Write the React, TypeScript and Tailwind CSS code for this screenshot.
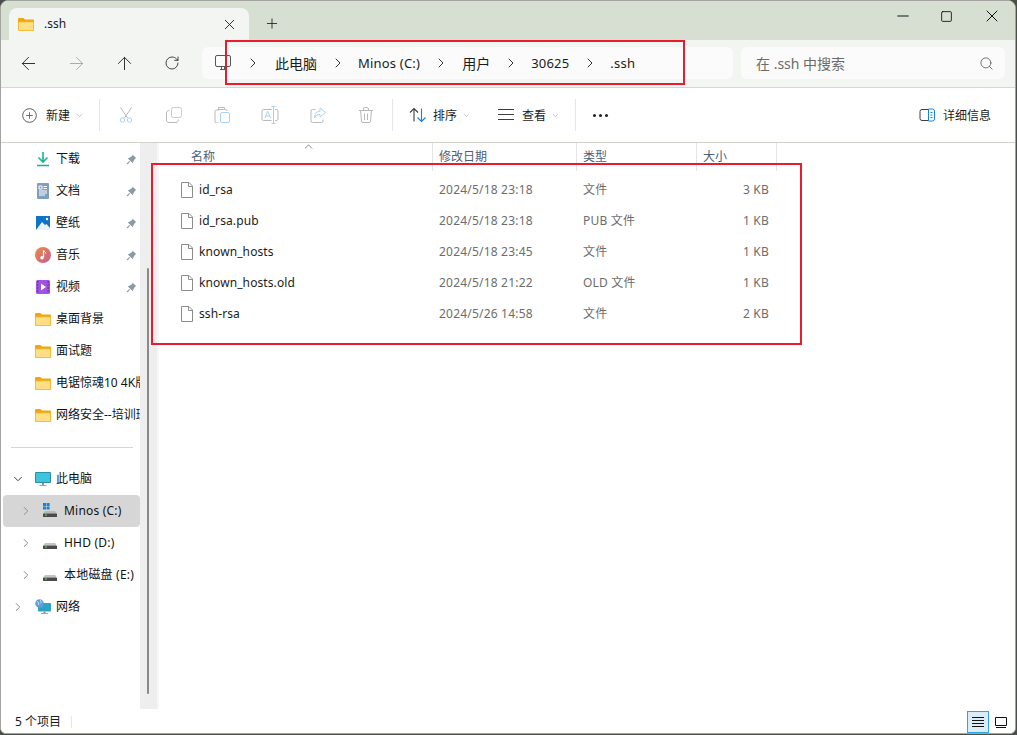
import {
  ArrowLeft,
  ArrowRight,
  ArrowUp,
  ChevronDown,
  ChevronRight,
  ChevronUp,
  Minus,
  Plus,
  RotateCw,
  Search,
  Square,
  X,
} from "lucide-react";
import type { ReactNode } from "react";

const FONT = "font-['Noto_Sans','Noto_Sans_CJK_SC',sans-serif]";

function FolderIcon({ className = "w-4 h-4 shrink-0" }: { className?: string }) {
  return (
    <svg viewBox="0 0 16 16" className={className}>
      <path d="M0 3a1 1 0 0 1 1-1h4.500l1.500 1.500h8a1 1 0 0 1 1 1V6H0z" fill="#f0a80e" />
      <path d="M0 5.500h16V14a1 1 0 0 1-1 1H1a1 1 0 0 1-1-1z" fill="#f0b429" />
      <path d="M.8 6.200h14.400V14a.3.3 0 0 1-.3.3H1.100a.3.3 0 0 1-.3-.3z" fill="#ffdf85" />
    </svg>
  );
}

function DownloadIcon() {
  return (
    <svg viewBox="0 0 16 16" className="w-4 h-4 shrink-0">
      <path d="M8 1v9.500M3.500 6.500 8 11l4.500-4.500" stroke="#16b58e" strokeWidth="1.600" fill="none" />
      <path d="M2 14.500h12" stroke="#16b58e" strokeWidth="1.600" />
    </svg>
  );
}

function DocIcon() {
  return (
    <svg viewBox="0 0 16 16" className="w-4 h-4 shrink-0">
      <rect x="2" y="0" width="12" height="16" rx="1" fill="#7f9fc0" />
      <path d="M4 3h3v3H4zM8.500 3.500H12M8.500 5.500H12M4 8h8M4 10h8M4 12h6" stroke="#fff" strokeWidth="1" fill="none" />
    </svg>
  );
}

function PictureIcon() {
  return (
    <svg viewBox="0 0 16 16" className="w-4 h-4 shrink-0">
      <rect x="1" y="1" width="14" height="14" fill="#0f74c8" />
      <circle cx="12" cy="4" r="1.200" fill="#fff" />
      <path d="M1 15 7 7l3 3 1.500-1L15 13v2z" fill="#e8f3fb" />
    </svg>
  );
}

function MusicIcon() {
  return (
    <svg viewBox="0 0 16 16" className="w-4 h-4 shrink-0">
      <defs>
        <linearGradient id="music-bg" x1="0" y1="0" x2="1" y2="1">
          <stop offset="0" stopColor="#f08a3c" />
          <stop offset="1" stopColor="#c25c9a" />
        </linearGradient>
      </defs>
      <circle cx="8" cy="8" r="8" fill="url(#music-bg)" />
      <path d="M8.500 3.500v7" stroke="#fff" strokeWidth="1.300" />
      <path d="M8.800 3.500c.5 1.500 2 1.500 2 3" stroke="#fff" strokeWidth="1" fill="none" />
      <circle cx="7" cy="10.800" r="1.700" fill="#fff" />
    </svg>
  );
}

function VideoIcon() {
  return (
    <svg viewBox="0 0 16 16" className="w-4 h-4 shrink-0">
      <rect x="1" y="1" width="14" height="14" rx="1.500" fill="#a052e0" />
      <path d="M6 4.500v7l5-3.500z" fill="#fff" />
      <path d="M2 3h1.500M2 6h1.500M2 9h1.500M2 12h1.500M12.500 3H14M12.500 6H14M12.500 9H14M12.500 12H14" stroke="#4a1d8c" strokeWidth="1.200" />
    </svg>
  );
}

function PcIcon() {
  return (
    <svg viewBox="0 0 16 16" className="w-4 h-4 shrink-0">
      <rect x="0" y="1" width="16" height="11" rx="1" fill="#2c8fa8" />
      <rect x="1" y="2" width="14" height="9" fill="#3cc4de" />
      <rect x="7" y="12" width="2" height="2" fill="#7a9aa6" />
      <rect x="4.500" y="14" width="7" height="1" fill="#8fa8b2" />
    </svg>
  );
}

function DriveIcon({ windows = false }: { windows?: boolean }) {
  return (
    <svg viewBox="0 0 16 16" className="w-4 h-4">
      {windows && (
        <path d="M1 0h3v3H1zM4.600 0h3v3h-3zM1 3.600h3v3H1zM4.600 3.600h3v3h-3z" fill="#1683d8" />
      )}
      <path d="M1.500 10.500c.5-1.500 1-2.500 2-2.500h9c1 0 1.500 1 2 2.500z" fill={windows ? "#b8b8b8" : "#c4c4c4"} />
      <rect x="1" y="10.500" width="14" height="3.500" rx=".5" fill="#4a4a4a" />
      <rect x="3" y="11.500" width="2" height="1" fill="#5fe05f" />
    </svg>
  );
}

function NetworkIcon() {
  return (
    <svg viewBox="0 0 16 16" className="w-4 h-4 shrink-0">
      <rect x="3" y="4" width="13" height="8.500" rx=".8" fill="#2aa3c4" />
      <rect x="8.500" y="12.500" width="2" height="1.500" fill="#7a9aa6" />
      <rect x="6" y="14" width="7" height="1" fill="#8fa8b2" />
      <circle cx="4.500" cy="4.500" r="4.200" fill="#5f9fd8" />
      <path d="M2 2.500c1.500.5 2 2 1.500 3.500M5 .8c1 1 1.500 2.500.5 3.500" stroke="#d8ecf8" strokeWidth=".9" fill="none" />
    </svg>
  );
}

function PinIcon() {
  return (
    <svg viewBox="0 0 12 12" className="w-[11px] h-[11px]">
      <path d="M7.300.8 11.200 4.700 9.800 5.300 7.700 8.600 7.400 10.200 1.800 4.600 3.400 4.300 6.700 2.200z" fill="#8e989f" />
      <path d="M4 8 1 11" stroke="#8e989f" strokeWidth="1.300" />
    </svg>
  );
}

function FileIcon() {
  return (
    <svg viewBox="0 0 12 16" className="w-3 h-4 shrink-0">
      <path d="M.5.500h7.500l3.500 3.500v11.500H.5z" fill="#fff" stroke="#8c8c8c" />
      <path d="M7.500.500v4h4" fill="none" stroke="#8c8c8c" />
    </svg>
  );
}

const GREY = "#b9b9b9";
const BLUE = "#a9d2f2";

function CutIcon() {
  return (
    <svg viewBox="0 0 16 16" className="w-4 h-4" fill="none" strokeWidth="1">
      <path d="M2.500.5 9.500 11M13.500.5 6.500 11" stroke={GREY} />
      <circle cx="4.500" cy="13" r="2.200" stroke={BLUE} />
      <circle cx="11.500" cy="13" r="2.200" stroke={BLUE} />
    </svg>
  );
}

function CopyIcon() {
  return (
    <svg viewBox="0 0 16 16" className="w-4 h-4" fill="none" strokeWidth="1">
      <rect x="5.500" y=".5" width="10" height="10" rx="2" stroke={BLUE} />
      <path d="M3.500 3.500c-2 0-3 1-3 2.500v7c0 1.500 1 2.500 2.500 2.500h7c1.500 0 2.500-1 2.500-3" stroke={GREY} />
    </svg>
  );
}

function PasteIcon() {
  return (
    <svg viewBox="0 0 16 16" className="w-4 h-4" fill="none" strokeWidth="1">
      <path d="M5.500 3H2.500a1.500 1.500 0 0 0-1.500 1.500v10A1.500 1.500 0 0 0 2.500 16h3M4.500 2.500h6V.5h-6zM10.500 2.500h1a1.500 1.500 0 0 1 1.500 1.500" stroke={GREY} />
      <rect x="6.500" y="5.500" width="9" height="10" rx="1.500" stroke={BLUE} />
    </svg>
  );
}

function RenameIcon() {
  return (
    <svg viewBox="0 0 18 18" className="w-[18px] h-[18px]" fill="none" strokeWidth="1">
      <path d="M10.500 3.500H2.500a1.500 1.500 0 0 0-1.500 1.500v8a1.500 1.500 0 0 0 1.500 1.500h8M14 3.500h1.500A1.500 1.500 0 0 1 17 5v8a1.500 1.500 0 0 1-1.500 1.500H14" stroke={GREY} />
      <path d="M12.500 1v16M10.500.5h4M10.500 17.500h4" stroke={BLUE} />
      <path d="M4 12l2.500-6.500h.5L9.500 12M5 10h3.500" stroke={BLUE} />
    </svg>
  );
}

function ShareIcon() {
  return (
    <svg viewBox="0 0 16 16" className="w-4 h-4" fill="none" strokeWidth="1">
      <path d="M5.500 2.500H2.500A1.500 1.500 0 0 0 1 4v10a1.500 1.500 0 0 0 1.500 1.500h9A1.500 1.500 0 0 0 13 14v-1.500" stroke={GREY} />
      <path d="M10 .8 15.500 5.500 10 10V7.500C7.500 7.500 5.500 8.500 4.500 11c0-4 2-6.500 5.500-6.800z" stroke={BLUE} />
    </svg>
  );
}

function TrashIcon() {
  return (
    <svg viewBox="0 0 16 16" className="w-4 h-4" fill="none" strokeWidth="1" stroke={GREY}>
      <path d="M1 3.500h14M5.500 3.500V2a1.500 1.500 0 0 1 1.500-1.500h2A1.500 1.500 0 0 1 10.500 2v1.500M2.500 3.500l1 10.500a1.500 1.500 0 0 0 1.500 1.500h6a1.500 1.500 0 0 0 1.500-1.500l1-10.500M6.500 6.500v6.500M9.500 6.500v6.500" />
    </svg>
  );
}

function SortIcon() {
  return (
    <svg viewBox="0 0 18 16" className="w-[18px] h-4" fill="none" strokeWidth="1.100">
      <path d="M5 14.500V1.500M1 5.500l4-4 4 4" stroke="#3d3d3d" />
      <path d="M12.500 1.500v13M8.500 10.500l4 4 4-4" stroke="#1683d8" />
    </svg>
  );
}

function ViewIcon() {
  return (
    <svg viewBox="0 0 16 12" className="w-4 h-3" stroke="#3d3d3d" strokeWidth="1">
      <path d="M0 .5h16M0 5.500h16M0 10.500h16" />
    </svg>
  );
}

function PanelIcon() {
  return (
    <svg viewBox="0 0 16 14" className="w-4 h-[14px]" fill="none" strokeWidth="1">
      <path d="M9.500 1.500H3A2 2 0 0 0 1 3.500v7a2 2 0 0 0 2 2h6.500" stroke="#3d3d3d" />
      <path d="M9.500 1h4A2 2 0 0 1 15.500 3v8a2 2 0 0 1-2 2h-4z" stroke="#1683d8" />
      <path d="M11.500 4.500h2M11.500 7h2M11.500 9.500h2" stroke="#1683d8" />
    </svg>
  );
}

function NavButton({ children }: { children: ReactNode }) {
  return <div className="w-12 h-8 flex items-center justify-center shrink-0">{children}</div>;
}

function Chevron() {
  return <ChevronRight size={16} strokeWidth={1.500} className="text-[#333] shrink-0 ml-[13px]" />;
}

function Titlebar() {
  return (
    <div className="h-[39px] bg-[#d7ded2] flex shrink-0">
      <div className="ml-[8px] mt-[7px] w-[240px] h-[32px] bg-[#f3f5f2] rounded-t-lg flex items-center pl-[9px] pr-[11px]">
        <FolderIcon className="w-4 h-4" />
        <span className="ml-[10px] text-[12px] text-[#1c1c1c] flex-1">.ssh</span>
        <X size={17} strokeWidth={1.300} className="text-[#222]" />
      </div>
      <div className="ml-[15px] mt-[14px] w-4 h-4 flex items-center justify-center">
        <Plus size={17} strokeWidth={1.300} className="text-[#222]" />
      </div>
      <div className="ml-auto flex items-center h-[30px] pr-[13px] text-[#111]">
        <Minus size={18} strokeWidth={1.300} className="mr-[28px]" />
        <Square size={13} strokeWidth={1.600} className="mr-[29px]" />
        <X size={20} strokeWidth={1.200} />
      </div>
    </div>
  );
}

function AddressBar() {
  return (
    <div className="h-[48px] bg-[#f3f5f2] border-b border-[#d6d6d6] flex items-center pl-[3px] pb-[1px] shrink-0">
      <NavButton>
        <ArrowLeft size={21} strokeWidth={1.100} className="text-[#2c2c2c]" />
      </NavButton>
      <NavButton>
        <ArrowRight size={21} strokeWidth={1.100} className="text-[#a8a8a8]" />
      </NavButton>
      <NavButton>
        <ArrowUp size={21} strokeWidth={1.100} className="text-[#2c2c2c]" />
      </NavButton>
      <NavButton>
        <RotateCw size={16} strokeWidth={1.300} className="text-[#2c2c2c]" />
      </NavButton>
      <div className="ml-[6px] w-[531px] h-8 bg-[#fafbfa] rounded-md flex items-center pl-[13px] shrink-0 text-[#1c1c1c] whitespace-nowrap">
        <svg viewBox="0 0 16 16" className="w-4 h-4 text-[#555] shrink-0" fill="none" stroke="currentColor" strokeWidth="1">
          <rect x=".5" y=".5" width="15" height="11" rx="1.500" />
          <path d="M6.500 11.500v3M9.500 11.500v3M5 14.500h6" />
        </svg>
        <ChevronRight size={16} strokeWidth={1.500} className="text-[#333] shrink-0 ml-[14px]" />
        <span className="ml-[14px] text-[14px]">此电脑</span>
        <Chevron />
        <span className="ml-[12px] text-[13px] tracking-[0.2px] pt-[2px]">Minos (C:)</span>
        <Chevron />
        <span className="ml-[13px] text-[14px]">用户</span>
        <Chevron />
        <span className="ml-[12px] text-[13px] tracking-[0.2px] pt-[2px]">30625</span>
        <Chevron />
        <span className="ml-[12px] text-[13px] tracking-[0.2px] pt-[2px]">.ssh</span>
      </div>
      <div className="ml-[8px] w-[264px] h-8 bg-[#fafbfa] rounded-md flex items-center pl-[15px] pr-[11px] shrink-0">
        <span className="text-[14px] text-[#6b6b6b] flex-1">在 .ssh 中搜索</span>
        <Search size={15} strokeWidth={1.300} className="text-[#555]" />
      </div>
    </div>
  );
}

function Toolbar() {
  return (
    <div className="h-[55px] bg-white border-b border-[#d2d2cc] flex items-center shrink-0 text-[12px] text-[#1c1c1c]">
      <svg viewBox="0 0 16 16" className="w-[15px] h-[15px] ml-[21px]" fill="none">
        <circle cx="8" cy="8" r="7.300" stroke="#555" />
        <path d="M8 4.500v7M4.500 8h7" stroke="#1683d8" strokeWidth="1.100" />
      </svg>
      <span className="ml-[9px] pt-[2px]">新建</span>
      <ChevronDown size={9} strokeWidth={1.300} className="ml-[5px] text-[#888]" />
      <div className="ml-[15px] w-px h-8 bg-[#e6e6e6]" />
      <div className="ml-[2px] flex">
        <NavButton><CutIcon /></NavButton>
        <NavButton><CopyIcon /></NavButton>
        <NavButton><PasteIcon /></NavButton>
        <NavButton><RenameIcon /></NavButton>
        <NavButton><ShareIcon /></NavButton>
        <NavButton><TrashIcon /></NavButton>
      </div>
      <div className="ml-[2px] w-px h-8 bg-[#e6e6e6]" />
      <div className="ml-[16px]"><SortIcon /></div>
      <span className="ml-[6px] pt-[2px]">排序</span>
      <ChevronDown size={9} strokeWidth={1.300} className="ml-[5px] text-[#888]" />
      <div className="ml-[27px]"><ViewIcon /></div>
      <span className="ml-[8px] pt-[2px]">查看</span>
      <ChevronDown size={9} strokeWidth={1.300} className="ml-[5px] text-[#888]" />
      <div className="ml-[15px] w-px h-8 bg-[#e6e6e6]" />
      <div className="ml-[17px] flex gap-[3px] pt-[1px]">
        <span className="w-[3px] h-[3px] rounded-full bg-[#222]" />
        <span className="w-[3px] h-[3px] rounded-full bg-[#222]" />
        <span className="w-[3px] h-[3px] rounded-full bg-[#222]" />
      </div>
      <div className="ml-auto flex items-center pr-[24px]">
        <PanelIcon />
        <span className="ml-[8px] pt-[2px]">详细信息</span>
      </div>
    </div>
  );
}

const PINNED = [
  { label: "下载", icon: <DownloadIcon /> },
  { label: "文档", icon: <DocIcon /> },
  { label: "壁纸", icon: <PictureIcon /> },
  { label: "音乐", icon: <MusicIcon /> },
  { label: "视频", icon: <VideoIcon /> },
];

const FOLDERS = ["桌面背景", "面试题", "电锯惊魂10 4K版", "网络安全--培训班"];

function SideRow({ icon, label, pinned }: { icon: ReactNode; label: string; pinned?: boolean }) {
  return (
    <div className="h-8 flex items-center pl-[34px] shrink-0">
      {icon}
      <span className="ml-[5px] whitespace-nowrap">{label}</span>
      {pinned && (
        <div className="ml-auto mr-[3px]">
          <PinIcon />
        </div>
      )}
    </div>
  );
}

function DriveRow({ label, windows, selected }: { label: string; windows?: boolean; selected?: boolean }) {
  return (
    <div className={`h-8 flex items-center shrink-0 ml-[2px] rounded-[4px] ${selected ? "bg-[#d6d6d6]" : ""}`}>
      <ChevronRight size={14} strokeWidth={1.600} className="ml-[16px] text-[#888] shrink-0" />
      <div className="ml-[9px] shrink-0"><DriveIcon windows={windows} /></div>
      <span className="ml-[6px] whitespace-nowrap tracking-[0.2px]">{label}</span>
    </div>
  );
}

function Sidebar() {
  return (
    <div className="w-[139px] shrink-0 overflow-hidden flex flex-col text-[12px] text-[#111]">
      {PINNED.map((item) => (
        <SideRow key={item.label} icon={item.icon} label={item.label} pinned />
      ))}
      {FOLDERS.map((name) => (
        <SideRow key={name} icon={<FolderIcon />} label={name} />
      ))}
      <div className="mt-[16px] mb-[15px] ml-[10px] mr-[7px] h-px bg-[#d4d4d4] shrink-0" />
      <div className="h-8 flex items-center shrink-0">
        <ChevronDown size={14} strokeWidth={1.600} className="ml-[10px] text-[#333] shrink-0" />
        <div className="ml-[10px]"><PcIcon /></div>
        <span className="ml-[5px]">此电脑</span>
      </div>
      <DriveRow label="Minos (C:)" windows selected />
      <DriveRow label="HHD (D:)" />
      <DriveRow label="本地磁盘 (E:)" />
      <div className="h-8 flex items-center shrink-0">
        <ChevronRight size={14} strokeWidth={1.600} className="ml-[10px] text-[#888] shrink-0" />
        <div className="ml-[10px]"><NetworkIcon /></div>
        <span className="ml-[5px]">网络</span>
      </div>
    </div>
  );
}

const FILES = [
  { name: "id_rsa", date: "2024/5/18 23:18", type: "文件", size: "3 KB" },
  { name: "id_rsa.pub", date: "2024/5/18 23:18", type: "PUB 文件", size: "1 KB" },
  { name: "known_hosts", date: "2024/5/18 23:45", type: "文件", size: "1 KB" },
  { name: "known_hosts.old", date: "2024/5/18 21:22", type: "OLD 文件", size: "1 KB" },
  { name: "ssh-rsa", date: "2024/5/26 14:58", type: "文件", size: "2 KB" },
];

function FileList() {
  return (
    <div className="flex-1 flex flex-col border-l-2 border-[#f6f6f6] min-w-0">
      <div className="h-[32px] shrink-0 flex text-[12px] text-[#4d6079] border-t border-[#d2d2cc] -mt-px relative">
        <ChevronUp size={13} strokeWidth={1.300} className="absolute left-[143px] top-[-3px] text-[#555]" />
        <div className="w-[274px] h-[28px] border-r border-[#e4e4e4] pl-[32px] flex items-center">名称</div>
        <div className="w-[144px] h-[28px] border-r border-[#e4e4e4] pl-[6px] flex items-center">修改日期</div>
        <div className="w-[120px] h-[28px] border-r border-[#e4e4e4] pl-[6px] flex items-center">类型</div>
        <div className="w-[80px] h-[28px] border-r border-[#e4e4e4] pl-[6px] flex items-center">大小</div>
      </div>
      {FILES.map((file) => (
        <div key={file.name} className="h-[31px] shrink-0 flex items-center text-[12px] text-[#6d6d6d] tracking-[0.2px]">
          <div className="w-[274px] flex items-center pl-[22px] text-[#1c1c1c] tracking-[0.1px]">
            <FileIcon />
            <span className="ml-[6px] whitespace-nowrap">{file.name}</span>
          </div>
          <div className="w-[144px] pl-[6px] whitespace-nowrap">{file.date}</div>
          <div className="w-[120px] pl-[6px] whitespace-nowrap">{file.type}</div>
          <div className="w-[80px] pr-[8px] text-right whitespace-nowrap">{file.size}</div>
        </div>
      ))}
    </div>
  );
}

function StatusBar() {
  return (
    <div className="h-[24px] shrink-0 bg-white flex items-center text-[12px] text-[#1c1c1c] pl-[14px] pt-[2px]">
      <span>5 个项目</span>
      <div className="ml-[10px] w-px h-[12px] bg-[#e6e6e6]" />
      <div className="ml-auto flex items-center pr-[4px]">
        <div className="w-[22px] h-[22px] border border-[#2fa4df] bg-[#d9ecf8] flex items-center justify-center">
          <svg viewBox="0 0 12 10" className="w-3 h-[10px]" stroke="#111" strokeWidth="1">
            <path d="M0 .5h12M0 3.500h12M0 6.500h12M0 9.500h12" />
          </svg>
        </div>
        <div className="ml-[2px] w-[20px] h-[22px] flex items-center justify-center">
          <svg viewBox="0 0 12 11" className="w-3 h-[11px]" fill="none" stroke="#111" strokeWidth="1">
            <path d="M.5.500h11v8H.5zM1 10.500h10" />
          </svg>
        </div>
      </div>
    </div>
  );
}

export default function App() {
  return (
    <div className={`w-[1017px] h-[735px] bg-[#4a4f47] overflow-hidden relative ${FONT}`}>
      <div className="w-[1016px] h-[734px] flex flex-col bg-white border border-[#a3a3a0] rounded-t-lg rounded-b-md overflow-hidden">
        <Titlebar />
        <AddressBar />
        <Toolbar />
        <div className="flex-1 flex min-h-0">
          <Sidebar />
          <div className="w-[17px] shrink-0 bg-[#eeeeee] flex justify-center pr-[1px]">
            <div className="w-[2px] mt-[125px] h-[426px] bg-[#8a8a8a] rounded-full" />
          </div>
          <FileList />
        </div>
        <StatusBar />
      </div>
      <div className="absolute left-[225px] top-[40px] w-[460px] h-[45px] border-2 border-[#e81c2c] pointer-events-none" />
      <div className="absolute left-[151px] top-[163px] w-[651px] h-[182px] border-2 border-[#e81c2c] pointer-events-none" />
    </div>
  );
}
